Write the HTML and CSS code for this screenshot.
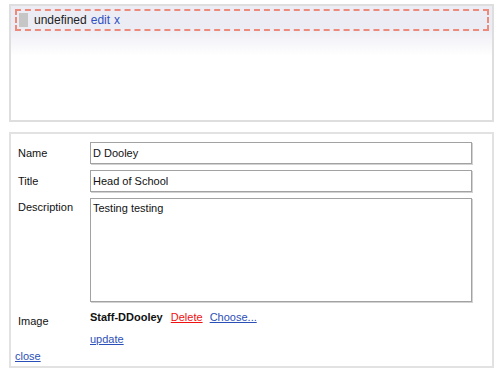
FILE: index.html
```html
<!DOCTYPE html>
<html>
<head>
	<meta charset="UTF-8">
	<title>Staff editor</title>
	<link rel="stylesheet" href="styles.css">
</head>
<body>
	<div class="preview">
		<div class="item">
			<span class="handle"></span>
			<span class="itemName">undefined</span>
			<a class="itemLink" href="#">edit</a>
			<a class="itemLink" href="#">x</a>
		</div>
	</div>

	<div class="editor">
		<div class="row">
			<label class="label" for="nameInput">Name</label>
			<input id="nameInput" class="field" type="text" value="D Dooley">
		</div>
		<div class="row">
			<label class="label" for="titleInput">Title</label>
			<input id="titleInput" class="field" type="text" value="Head of School">
		</div>
		<div class="row rowTop">
			<label class="label labelTop" for="descInput">Description</label>
			<textarea id="descInput" class="field area">Testing testing</textarea>
		</div>
		<div class="row rowImage">
			<span class="label labelImage">Image</span>
			<div class="imageValue">
				<b>Staff-DDooley</b>
				<a class="delete" href="#">Delete</a>
				<a href="#">Choose...</a>
			</div>
		</div>
		<div class="row rowUpdate">
			<span class="label"></span>
			<a class="update" href="#">update</a>
		</div>
		<a class="close" href="#">close</a>
	</div>
</body>
</html>
```

FILE: styles.css
```css
body { margin: 4px 6px 0 9px; font-family: "Liberation Sans", Arial, sans-serif; font-size: 11px; color: #111; }

a { color: #2b4fb8; }

.preview {
	height: 111px;
	border: 2px solid #dedede;
	background: linear-gradient(#ececf5 0px, #ececf5 22px, #ffffff 50px);
	padding: 3px 3px 0 4px;
}
.item {
	display: flex;
	align-items: center;
	height: 16px;
	border: 2px dashed #ec8a7c;
	padding: 1px 2px;
	font-size: 12px;
	color: #222;
}
.handle { width: 9px; height: 14px; background: #c6c6c6; margin-right: 6px; }
.itemName { margin-right: 4px; }
.itemLink { color: #2f50c0; text-decoration: none; margin-right: 4px; }

.editor {
	margin-top: 10px;
	border: 2px solid #e2e2e2;
	padding: 8px 0 0 4px;
	height: 224px;
}
.row { display: flex; align-items: center; padding-left: 3px; margin-bottom: 6px; }
.rowTop { align-items: flex-start; margin-bottom: 7px; }
.rowImage { align-items: flex-start; margin-bottom: 2px; }
.rowUpdate { margin-bottom: 2px; }
.label { width: 72px; flex: none; }
.labelTop { padding-top: 3px; }
.labelImage { padding-top: 4px; line-height: 16px; }

.field {
	box-sizing: border-box;
	width: 382px;
	height: 22px;
	margin: 0;
	padding: 1px 2px;
	border: 1px solid #a2a2a2;
	box-shadow: 1px 1px 0 #d2d2d2;
	font-family: "Liberation Sans", Arial, sans-serif;
	font-size: 11px;
	color: #111;
}
.area { height: 104px; resize: none; padding-top: 3px; }

.imageValue { line-height: 16px; }
.imageValue b { margin-right: 5px; }
.delete { color: #f01010; margin-right: 4px; }
.update { line-height: 16px; }
.close { display: block; line-height: 14px; }
```
